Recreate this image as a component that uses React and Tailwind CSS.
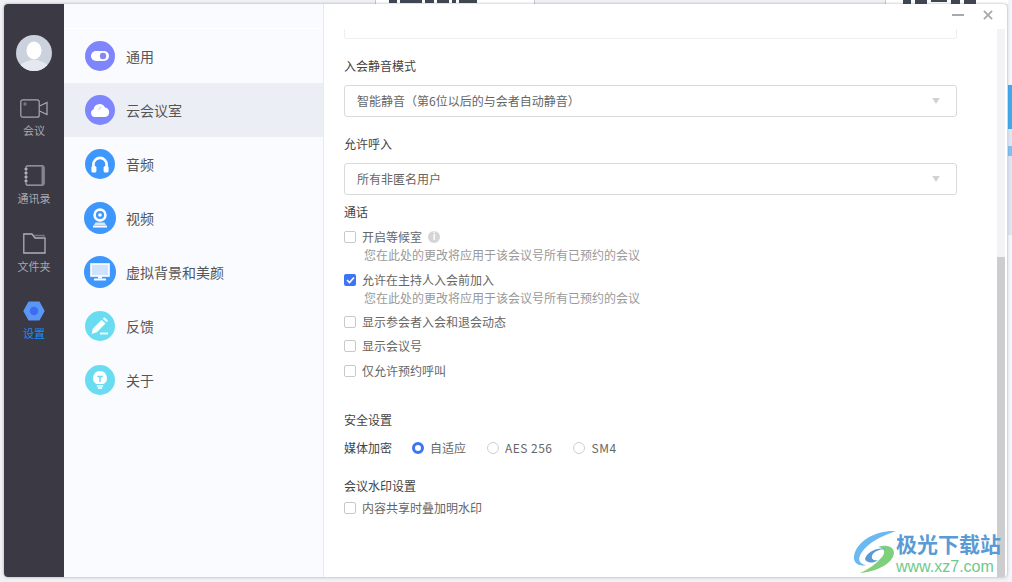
import React from 'react';

const font = { fontFamily: '"Noto Sans CJK SC", "Noto Sans", sans-serif' };

const CameraIcon = () => (
  <svg width="28" height="19" viewBox="0 0 28 19" fill="none" stroke="#a9a9ad" strokeWidth="1.2">
    <rect x="0.8" y="0.8" width="18.4" height="17.4" rx="2" />
    <path d="M19.5 7 L27 3.5 V15.5 L19.5 12" />
    <circle cx="5" cy="5" r="1.7" fill="#77777d" stroke="none" />
  </svg>
);

const BookIcon = () => (
  <svg width="21" height="21" viewBox="0 0 21 21" fill="none">
    <rect x="2" y="0.8" width="18" height="19.4" rx="1.5" stroke="#a9a9ad" strokeWidth="1.2" />
    <rect x="17.5" y="1" width="2.5" height="19" fill="#85858a" />
    <path d="M0.5 4h3M0.5 8h3M0.5 12h3M0.5 16h3" stroke="#c4c4c8" strokeWidth="1.6" />
  </svg>
);

const FolderIcon = () => (
  <svg width="23" height="21" viewBox="0 0 23 21" fill="none" stroke="#b0b0b4" strokeWidth="1.3">
    <path d="M0.8 1 H9 L12 5 H22 V20 H0.8 Z" />
    <path d="M11 2.5 H21 V5" stroke="#77777c" />
  </svg>
);

const GearIcon = () => (
  <svg width="22" height="20" viewBox="0 0 22 20">
    <path d="M5.5 0.5 H16.5 L21.7 10 L16.5 19.5 H5.5 L0.3 10 Z" fill="#5a97f5" />
    <circle cx="11" cy="10" r="4.2" fill="#3c6cf0" />
  </svg>
);

const ToggleGlyph = () => (
  <svg width="18" height="10" viewBox="0 0 18 10">
    <rect width="18" height="10" rx="5" fill="#fff" />
    <circle cx="12" cy="5" r="3.2" fill="#8587f5" />
  </svg>
);

const CloudGlyph = () => (
  <svg width="20" height="14" viewBox="0 0 20 14">
    <path d="M5 14 A4 4 0 0 1 3.6 6.3 A6 6 0 0 1 15 4.6 A4.8 4.8 0 0 1 15.5 14 Z" fill="#fff" />
    <path d="M10 3.5 C8.4 5 8 7 8.6 8.6 C9.2 6.6 10.2 5.2 12 4.4 Z" fill="#d9d9fb" />
  </svg>
);

const HeadsetGlyph = () => (
  <svg width="18" height="17" viewBox="0 0 18 17" fill="none">
    <path d="M2.4 11 V8.5 A6.6 6.6 0 0 1 15.6 8.5 V11" stroke="#fff" strokeWidth="2.6" />
    <rect x="0.4" y="10" width="5" height="6.6" rx="1.6" fill="#fff" />
    <rect x="12.6" y="10" width="5" height="6.6" rx="1.6" fill="#fff" />
  </svg>
);

const WebcamGlyph = () => (
  <svg width="16" height="20" viewBox="0 0 16 20" fill="none">
    <circle cx="8" cy="7" r="5.4" stroke="#fff" strokeWidth="2.6" />
    <circle cx="8" cy="7" r="1.8" fill="#fff" />
    <path d="M3.5 14.5 H12.5 L14 17 H2 Z" fill="#d6e8ff" />
    <rect x="1" y="17.5" width="14" height="2" rx="0.6" fill="#fff" />
  </svg>
);

const MonitorGlyph = () => (
  <svg width="20" height="18" viewBox="0 0 20 18" fill="none">
    <rect x="1" y="1" width="18" height="12" stroke="#fff" strokeWidth="1.6" fill="#cfe3ff" />
    <path d="M8 13.5 H12 V15.5 H8 Z" fill="#fff" />
    <rect x="4" y="15.5" width="12" height="2" rx="0.5" fill="#fff" />
  </svg>
);

const PenGlyph = () => (
  <svg width="18" height="18" viewBox="0 0 18 18">
    <path d="M0.5 17 L2 11.5 L10.5 3 L14.5 6.5 L5.8 15.2 Z" fill="#fff" />
    <path d="M11.8 1.8 L13.4 0.3 L17 3.6 L15.6 5.2 Z" fill="#fff" />
    <rect x="9" y="15.6" width="8" height="1.8" fill="#fff" />
  </svg>
);

const BulbGlyph = () => (
  <svg width="14" height="18" viewBox="0 0 14 18">
    <path d="M7 0 A7 7 0 0 1 10.5 13 H3.5 A7 7 0 0 1 7 0 Z" fill="#fff" />
    <path d="M4.4 5.6 H9.6 M7 5.6 V11" stroke="#6adcf2" strokeWidth="1.5" fill="none" />
    <rect x="3.8" y="14" width="6.4" height="1.6" fill="#fff" />
    <rect x="4.8" y="16.2" width="4.4" height="1.6" fill="#fff" />
  </svg>
);

const navItems = [
  { label: '通用', bg: 'bg-[#7f86fd]', size: 'w-[30px] h-[30px]', icon: <ToggleGlyph /> },
  { label: '云会议室', bg: 'bg-[#7f86fd]', size: 'w-[30px] h-[30px]', icon: <CloudGlyph />, active: true },
  { label: '音频', bg: 'bg-[#3e97fd]', size: 'w-[30px] h-[30px]', icon: <HeadsetGlyph /> },
  { label: '视频', bg: 'bg-[#3e97fd]', size: 'w-[32px] h-[32px] -mx-px', icon: <WebcamGlyph /> },
  { label: '虚拟背景和美颜', bg: 'bg-[#3e97fd]', size: 'w-[32px] h-[32px] -mx-px', icon: <MonitorGlyph /> },
  { label: '反馈', bg: 'bg-[#6adcf2]', size: 'w-[30px] h-[30px]', icon: <PenGlyph /> },
  { label: '关于', bg: 'bg-[#6adcf2]', size: 'w-[30px] h-[30px]', icon: <BulbGlyph /> },
];

const Select = ({ text, className }) => (
  <div className={`h-[32px] w-[613px] flex items-center justify-between pl-[12px] pr-[16px] border border-[#d9d9d9] rounded-[3px] text-[12px] text-[#666] ${className}`}>
    <span>{text}</span>
    <svg width="8" height="6" viewBox="0 0 9 7"><path d="M0 0 H9 L4.5 7 Z" fill="#d2d2d2" /></svg>
  </div>
);

const Check = ({ checked, label, className, extra }) => (
  <div className={`h-[18px] flex items-center text-[12px] text-[#666] ${className}`}>
    {checked ? (
      <span className="w-[12px] h-[12px] mr-[6px] rounded-[2px] bg-[#3d74f6] flex items-center justify-center">
        <svg width="9" height="8" viewBox="0 0 9 8" fill="none"><path d="M1 4 L3.5 6.5 L8 1.5" stroke="#fff" strokeWidth="1.6" /></svg>
      </span>
    ) : (
      <span className="w-[12px] h-[12px] mr-[6px] rounded-[2px] border border-[#c9c9c9] bg-white" />
    )}
    <span>{label}</span>
    {extra}
  </div>
);

const Radio = ({ checked, label, className }) => (
  <div className={`flex items-center ${className}`}>
    <span className={`w-[12px] h-[12px] mr-[6px] rounded-full bg-white ${checked ? 'border-[3.5px] border-[#3d74f6]' : 'border border-[#cfcfcf]'}`} />
    <span>{label}</span>
  </div>
);

const SwirlLogo = () => (
  <svg width="44" height="44" viewBox="0 0 44 44" fill="none">
    <path d="M43 1 C24 0 4 10 1 26 C0 33 6 37 13 35 C6 34 4 29 9 22 C15 13 28 6 43 1 Z" fill="#6bb9ee" />
    <path d="M7 43 C22 42 40 34 41 23 C41 16 32 14 25 17 C32 18 33 23 28 28 C22 35 14 40 7 43 Z" fill="#7ed07c" />
    <path d="M12 29 C14 22 24 17 33 19 C26 19 20 22 19 26 C18 29 21 31 25 30 C20 34 13 33 12 29 Z" fill="#5b9bd5" />
    <path d="M7 43 C12 41 17 38 21 35 L14 39 Z" fill="#f0e27a" />
  </svg>
);

const App = () => (
  <div className="relative w-[1012px] h-[582px] overflow-hidden bg-[#eff1f5] pl-[4px] pt-[4px]" style={font}>
    {/* scraps of the window behind */}
    <div className="absolute left-[375px] top-0 w-[160px] h-[4px] border-x border-[#c9c9c9] bg-white flex gap-[3px] pl-[13px]">
      <span className="w-[8px] h-[3px] bg-[#3f4753]" />
      <span className="w-[22px] h-[3px] bg-[#3f4753]" />
      <span className="w-[9px] h-[3px] bg-[#3f4753]" />
      <span className="w-[12px] h-[3px] bg-[#3f4753]" />
      <span className="w-[4px] h-[3px] bg-[#3f4753]" />
      <span className="w-[18px] h-[3px] bg-[#3f4753]" />
    </div>
    <div className="absolute left-[885px] top-0 w-[127px] h-[4px] border-l border-[#c9c9c9] bg-white flex gap-[4px] pl-[17px]">
      <span className="w-[8px] h-[4px] bg-[#3f4753]" />
      <span className="w-[12px] h-[4px] bg-[#3f4753]" />
      <span className="w-[16px] h-[2px] bg-[#3f4753]" />
      <span className="w-[9px] h-[4px] bg-[#3f4753]" />
      <span className="w-[12px] h-[4px] bg-[#3f4753]" />
    </div>
    <div className="absolute left-[1008px] top-0 w-[4px] h-[582px] bg-[#f4f5f8]">
      <div className="mt-[85px] h-[44px] bg-[#41a9ee]" />
      <div className="h-[106px] bg-[#dfe5f0]">
        <div className="relative top-[17px] h-[10px] bg-[#7cc0f2]" />
      </div>
    </div>

    <div className="relative flex w-[1003px] h-[573px] rounded-[4px] overflow-hidden bg-white shadow-[0_0_3px_rgba(60,70,100,0.45)]">
      {/* left rail */}
      <div className="w-[60px] shrink-0 bg-[#3a3944] flex flex-col items-center pt-[31px] text-[11px] leading-[16px] text-[#a9a9ad]">
        <svg width="36" height="36" viewBox="0 0 36 36" className="rounded-full">
          <rect width="36" height="36" fill="#ccd1de" />
          <path d="M0 36 C4 27 11 27 14 25 H22 C25 27 32 27 36 36 Z" fill="#e6e8ef" />
          <ellipse cx="18" cy="15.5" rx="7.5" ry="9" fill="#fff" />
        </svg>
        <div className="mt-[28px]"><CameraIcon /></div>
        <div className="mt-[4px]">会议</div>
        <div className="mt-[27px]"><BookIcon /></div>
        <div className="mt-[4px] whitespace-nowrap">通讯录</div>
        <div className="mt-[27px]"><FolderIcon /></div>
        <div className="mt-[4px] whitespace-nowrap">文件夹</div>
        <div className="mt-[27px]"><GearIcon /></div>
        <div className="mt-[4px] text-[#1c8cf5]">设置</div>
      </div>

      {/* settings nav */}
      <div className="w-[260px] shrink-0 bg-[#fafbfe] border-r border-[#e8e9ee]">
        <div className="h-[25px] border-b border-white" />
        {navItems.map((item) => (
          <div key={item.label} className={`h-[54px] flex items-center pl-[21px] text-[14px] text-[#555] ${item.active ? 'bg-[#eceef5]' : ''}`}>
            <span className="w-[30px] flex justify-center mr-[11px]">
              <span className={`${item.size} shrink-0 rounded-full flex items-center justify-center ${item.bg}`}>{item.icon}</span>
            </span>
            <span>{item.label}</span>
          </div>
        ))}
      </div>

      {/* form */}
      <div className="relative flex-1 pl-[20px] pt-[25px] text-[12px] leading-[18px] text-[#444]">
        <div className="h-[10px] w-[613px] border-x border-b border-[#eeeeee] rounded-b-[3px]" />
        <div className="mt-[18px]">入会静音模式</div>
        <Select className="mt-[10px]" text="智能静音（第6位以后的与会者自动静音）" />
        <div className="mt-[18px]">允许呼入</div>
        <Select className="mt-[10px]" text="所有非匿名用户" />
        <div className="mt-[8px]">通话</div>
        <Check
          className="mt-[7px]"
          label="开启等候室"
          extra={<span className="ml-[6px] w-[12px] h-[12px] rounded-full bg-[#d5d5d5] text-white text-[9px] leading-[12px] text-center font-bold">i</span>}
        />
        <div className="h-[18px] pl-[20px] text-[#999]">您在此处的更改将应用于该会议号所有已预约的会议</div>
        <Check className="mt-[7px]" checked label="允许在主持人入会前加入" />
        <div className="h-[18px] pl-[20px] text-[#999]">您在此处的更改将应用于该会议号所有已预约的会议</div>
        <Check className="mt-[6px]" label="显示参会者入会和退会动态" />
        <Check className="mt-[6px]" label="显示会议号" />
        <Check className="mt-[7px]" label="仅允许预约呼叫" />
        <div className="mt-[31px]">安全设置</div>
        <div className="mt-[10px] h-[18px] flex items-center text-[#666]">
          <span className="text-[#444] mr-[20px]">媒体加密</span>
          <Radio checked label="自适应" className="mr-[21px]" />
          <Radio label="AES 256" className="mr-[21px] tracking-[0.45px]" />
          <Radio label="SM4" className="tracking-[0.6px]" />
        </div>
        <div className="mt-[20px]">会议水印设置</div>
        <Check className="mt-[4px]" label="内容共享时叠加明水印" />

        {/* scrollbar */}
        <div className="absolute right-[2px] top-[25px] bottom-0 w-[8px] bg-[#f3f3f5]">
          <div className="absolute left-0 right-0 top-[228px] bottom-0 bg-[#cdcdcf]" />
        </div>

        {/* window buttons */}
        <div className="absolute top-[6px] right-[14px] flex items-center gap-[19px]">
          <span className="w-[12px] h-[2px] bg-[#a9a9ad]" />
          <svg width="10" height="10" viewBox="0 0 11 11" stroke="#a9a9ad" strokeWidth="2"><path d="M1 1 L10 10 M10 1 L1 10" /></svg>
        </div>
      </div>
    </div>

    {/* watermark */}
    <div className="absolute left-[853px] top-[530px] flex">
      <SwirlLogo />
      <div className="ml-[-1px]">
        <div className="text-[21px] leading-[26px] font-bold text-[#5b9bd5] whitespace-nowrap">极光下载站</div>
        <div className="mt-[1px] text-[16px] leading-[20px] text-[#6fc98a] whitespace-nowrap" style={{ fontFamily: '"Liberation Sans", sans-serif' }}>www.xz7.com</div>
      </div>
    </div>
  </div>
);

export default App;
